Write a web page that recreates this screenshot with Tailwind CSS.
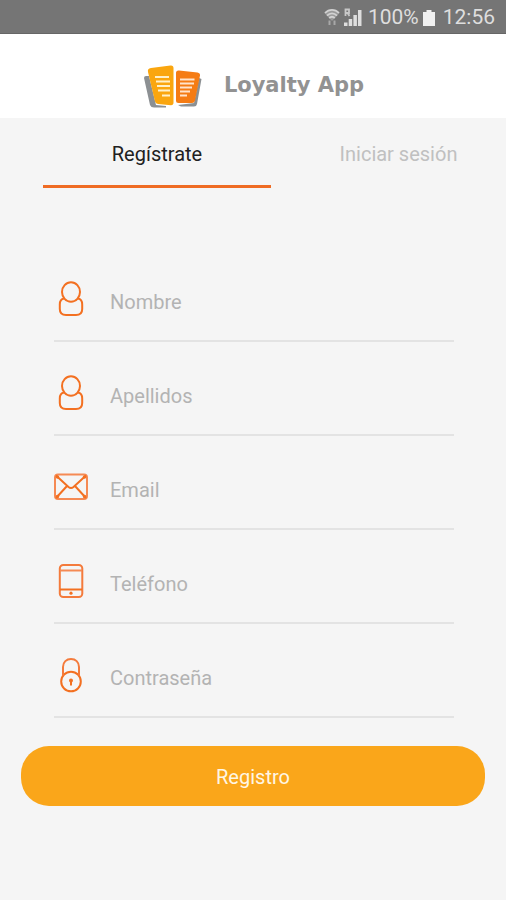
<!DOCTYPE html>
<html lang="es">
<head>
  <meta charset="utf-8">
  <meta name="viewport" content="width=device-width, initial-scale=1">
  <title>Loyalty App</title>
  <script src="https://cdn.jsdelivr.net/npm/@tailwindcss/browser@4"></script>
</head>
<body class="bg-[#f5f5f5] min-h-screen font-['Roboto',sans-serif]">
  <!-- Status bar -->
  <div class="bg-[#757575] border-b border-[#666666] h-[34px] pt-[2px] pr-[11px] flex items-center justify-end text-[21px] text-[#dedede]">
    <svg class="w-4 h-5 mr-1" viewBox="0 0 16 20" fill="none" stroke="#d2d2d2" stroke-width="1.8">
      <path d="M1 5C5 .8 11 .8 15 5M3 7.600C6 4.600 10 4.600 13 7.600M5.200 10C7 8.400 9 8.400 10.800 10"/>
      <path d="M.5 5L8 13L15.500 5Q8 -1 .5 5Z" fill="#d2d2d2" fill-opacity=".4" stroke="none"/>
      <path d="M5.500 12.500V17M10.500 17V12.500" stroke="#a8a8a8" stroke-width="2"/>
    </svg>
    <svg class="w-[18px] h-5 mr-[6px]" viewBox="0 0 18 20" fill="#dedede">
      <path d="M0 14.500h3.500V18H0zM4.700 11h3.500v7H4.700zM9.400 7h3.500v11H9.400zM14 2h3.500v16H14z"/>
      <path d="M1.500 8V1.500H5V5H1.500M3.500 5L5.500 8" fill="none" stroke="#c8c8c8" stroke-width="1.800"/>
    </svg>
    <span>100%</span>
    <svg class="w-3 h-[18px] ml-1 mr-2" viewBox="0 0 12 18" fill="#f0f0f0">
      <path d="M3.500 1h5v2H12v14H0V3h3.500z"/>
    </svg>
    <span>12:56</span>
  </div>

  <!-- Header -->
  <header class="bg-white h-[84px] pt-5 flex items-center justify-center gap-[22px]">
    <svg class="w-[60px] h-[44px]" viewBox="0 0 60 44">
      <path d="M2 14Q2 12 4 12H7L14 41L24 42V43.500H12Q9 43.500 8 41Z" fill="#8c9093"/>
      <path d="M57 14L59.500 15L55 40Q54.500 42.500 52 42.500H39L36 41L52 39Z" fill="#8c9093"/>
      <path d="M9 4L28.500 1.500Q31.500 1.200 31.500 4V38.500Q31.500 41.200 29 41.200L16 40Q13.500 39.800 13 37.500L6 8Q5.200 4.500 9 4Z" fill="#faa60f"/>
      <path d="M37 6.500L55.500 8.500Q58.300 9 58 11.500L53 36.500Q52.500 39 50 39H36.500Q34 39 34 36.500V9Q34 6.200 37 6.500Z" fill="#f57c14"/>
      <path d="M13 13H27M14 17.500H28M15 22H28M16 26.500H28M20 31.500H28" stroke="#fff0c9" stroke-width="2"/>
      <path d="M38 15.500H52.500M38 19.500H52M38 23.500H50M38 27.500H48M38 31.500H45" stroke="#ffe4cc" stroke-width="1.800"/>
    </svg>
    <h1 class="font-['DejaVu_Sans',sans-serif] font-bold text-[21px] text-[#929292]">Loyalty App</h1>
  </header>

  <!-- Tabs -->
  <nav class="grid grid-cols-[228fr_215fr] gap-5 pl-[43px] text-[20px] text-center">
    <a href="#registro" class="h-[70px] pt-[21px] border-b-3 border-[#ef6c24] text-[#212121]">Regístrate</a>
    <a href="#login" class="h-[70px] pt-[21px] text-[#c0c0c0]">Iniciar sesión</a>
  </nav>

  <form id="registro" class="pt-[60px] px-[21px] text-[20px]">
    <div class="pl-[33px] pr-[31px]">
      <div class="h-[94px] pt-[10px] border-b-2 border-[#e3e3e3] flex items-center gap-[22px]">
        <label for="nombre">
          <svg class="w-[34px] h-9" viewBox="0 0 34 36" fill="none" stroke="#f37021" stroke-width="2" aria-label="Nombre">
            <ellipse cx="17" cy="11" rx="9" ry="9.700"/>
            <path d="M10 17.500C7 18 5.800 20.500 5.800 23.500V28C5.800 32 8 34 12 34H22C26 34 28.200 32 28.200 28V23.500C28.200 20.500 27 18 24 17.500"/>
          </svg>
        </label>
        <input id="nombre" type="text" placeholder="Nombre" class="flex-1 min-w-0 pt-[6px] outline-none text-[#212121] placeholder:text-[#b3b3b3]">
      </div>
      <div class="h-[94px] pt-[10px] border-b-2 border-[#e3e3e3] flex items-center gap-[22px]">
        <label for="apellidos">
          <svg class="w-[34px] h-9" viewBox="0 0 34 36" fill="none" stroke="#f37021" stroke-width="2" aria-label="Apellidos">
            <ellipse cx="17" cy="11" rx="9" ry="9.700"/>
            <path d="M10 17.500C7 18 5.800 20.500 5.800 23.500V28C5.800 32 8 34 12 34H22C26 34 28.200 32 28.200 28V23.500C28.200 20.500 27 18 24 17.500"/>
          </svg>
        </label>
        <input id="apellidos" type="text" placeholder="Apellidos" class="flex-1 min-w-0 pt-[6px] outline-none text-[#212121] placeholder:text-[#b3b3b3]">
      </div>
      <div class="h-[94px] pt-[10px] border-b-2 border-[#e3e3e3] flex items-center gap-[22px]">
        <label for="email">
          <svg class="w-[34px] h-9" viewBox="0 0 34 36" fill="none" stroke="#f37021" stroke-width="2" aria-label="Email">
            <rect x="1" y="5.500" width="32" height="24.500" rx="3" stroke="#f58a54"/>
            <path d="M2 6.500L14.500 18Q17 20 19.500 18L32 6.500M2 29L13 17M32 29L21 17"/>
            <path d="M3.500 8h.01M30.500 8h.01M3.500 27.500h.01M30.500 27.500h.01" stroke-width="3.500" stroke-linecap="round"/>
          </svg>
        </label>
        <input id="email" type="email" placeholder="Email" class="flex-1 min-w-0 pt-[6px] outline-none text-[#212121] placeholder:text-[#b3b3b3]">
      </div>
      <div class="h-[94px] pt-[10px] border-b-2 border-[#e3e3e3] flex items-center gap-[22px]">
        <label for="telefono">
          <svg class="w-[34px] h-9" viewBox="0 0 34 36" fill="none" stroke="#f37021" stroke-width="2" aria-label="Teléfono">
            <rect x="5.800" y="2" width="22.500" height="32" rx="3.500" stroke="#f47b3c"/>
            <path d="M6 7.500H28" stroke="#f58a54"/>
            <path d="M6 26.500H28"/>
            <circle cx="17" cy="30.200" r="1.600" fill="#f37021" stroke="none"/>
          </svg>
        </label>
        <input id="telefono" type="tel" placeholder="Teléfono" class="flex-1 min-w-0 pt-[6px] outline-none text-[#212121] placeholder:text-[#b3b3b3]">
      </div>
      <div class="h-[94px] pt-[10px] border-b-2 border-[#e3e3e3] flex items-center gap-[22px]">
        <label for="contrasena">
          <svg class="w-[34px] h-9" viewBox="0 0 34 36" fill="none" stroke="#f37021" stroke-width="2" aria-label="Contraseña">
            <circle cx="17" cy="24.500" r="9.800"/>
            <path d="M9 18.500V10C9 5 12.500 2 17 2S25 5 25 10V18.500" stroke="#f47b3c"/>
            <path d="M17 22.500V28.500" stroke-width="2"/>
            <circle cx="17" cy="23.500" r="2" fill="#f37021" stroke="none"/>
          </svg>
        </label>
        <input id="contrasena" type="password" placeholder="Contraseña" class="flex-1 min-w-0 pt-[6px] outline-none text-[#212121] placeholder:text-[#b3b3b3]">
      </div>
    </div>
    <button type="submit" class="mt-7 w-full h-[60px] pt-[2px] rounded-[28px] bg-[#faa61a] text-[#fff6e5]">Registro</button>
  </form>
</body>
</html>
